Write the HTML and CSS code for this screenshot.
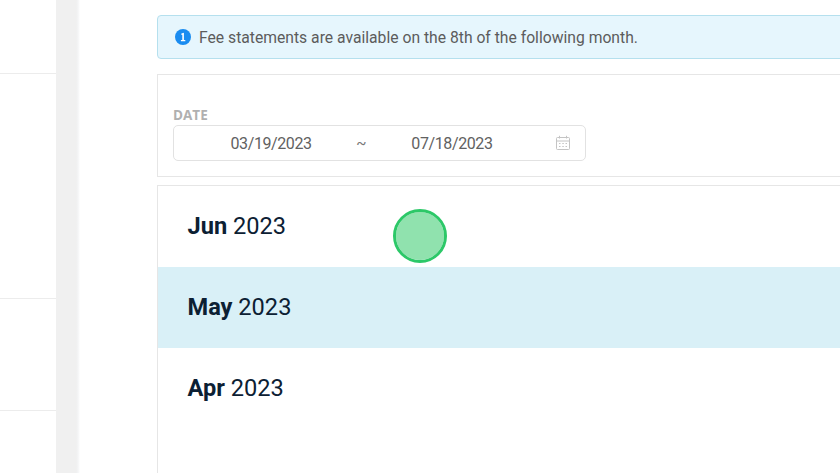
FILE: index.html
```html
<!DOCTYPE html>
<html lang="en">
<head>
<meta charset="utf-8">
<title>Fee statements</title>
<link rel="stylesheet" href="styles.css">
</head>
<body>
<div class="app">
  <aside class="sidebar">
    <div class="side-item first"></div>
    <div class="side-item second"></div>
    <div class="side-item third"></div>
  </aside>
  <div class="gutter"></div>
  <main class="main">
    <div class="alert">
      <svg class="info" viewBox="0 0 16 16" aria-hidden="true"><circle cx="8" cy="8" r="8" fill="#1a8cf0"/><path d="M6.400 4.600 8.900 3.700V11H10.300V12.300H5.900V11H7.300V5.700L6.400 6Z" fill="#fff"/></svg>
      <span>Fee statements are available on the 8th of the following month.</span>
    </div>
    <section class="filter">
      <div class="label">DATE</div>
      <div class="range">
        <span class="date start">03/19/2023</span>
        <span class="tilde">~</span>
        <span class="date end">07/18/2023</span>
        <svg class="cal" viewBox="0 0 16 16" aria-hidden="true"><g fill="none" stroke="#c4c4c4"><rect x="1.500" y="2.500" width="13" height="12" rx="1"/><path d="M1.500 6H14.500M4.500 .8V3.500M11.500 .8V3.500"/><path d="M4 8.500H5.500M7.300 8.500H8.800M10.500 8.500H12M4 11.500H5.500M7.300 11.500H8.800M10.500 11.500H12"/></g></svg>
      </div>
    </section>
    <section class="months">
      <div class="month"><b>Jun</b> 2023</div>
      <div class="month active"><b>May</b> 2023</div>
      <div class="month"><b>Apr</b> 2023</div>
    </section>
  </main>
</div>
<div class="touch"></div>
</body>
</html>
```
FILE: styles.css
```css
* { box-sizing: border-box; }
html, body { margin: 0; height: 100%; overflow: hidden; background: #fff; }
body { font-family: Roboto, "Liberation Sans", sans-serif; }
.app { display: flex; width: 840px; height: 473px; overflow: hidden; }
.sidebar { width: 56px; flex: none; }
.side-item { border-bottom: 1px solid #ececec; }
.first { height: 74px; }
.second { height: 225px; }
.third { height: 112px; }
.gutter { width: 24px; flex: none; background: linear-gradient(to right, #f0f0f0 84%, #f4f5f6 92%, #fff); }
.main { flex: none; width: 800px; padding: 15px 0 0 77px; }
.alert { display: flex; align-items: center; gap: 8px; height: 44px; width: 721px; padding-left: 17px; background: #e6f6fd; border: 1px solid #b5e0ee; border-radius: 4px; color: #5c5c5c; font-size: 15.7px; }
.info { width: 16px; height: 16px; flex: none; }
.filter { margin-top: 15px; height: 103px; width: 721px; padding: 32px 0 0 15px; border: 1px solid #e6e6e6; }
.label { font: 700 13.5px/16px "Open Sans", sans-serif; color: #b0b0b0; }
.range { display: flex; align-items: center; width: 413px; height: 36px; margin-top: 2px; border: 1px solid #e2e2e2; border-radius: 5px; color: #616161; }
.date { font-size: 16px; letter-spacing: -.4px; }
.start { margin-left: 56.500px; }
.tilde { margin-left: 44.500px; color: #777; font-size: 15px; }
.end { margin-left: 45px; }
.cal { width: 16px; height: 16px; margin-left: 62px; }
.months { margin-top: 8px; width: 721px; height: 300px; border: 1px solid #e6e6e6; border-bottom: 0; }
.month { height: 81px; padding-left: 29.500px; font-size: 23.600px; line-height: 81px; color: #0c2033; }
.month b { font-weight: 700; }
.active { background: #d9f0f7; }
.touch { position: absolute; left: 393px; top: 209px; width: 54px; height: 54px; border-radius: 50%; background: rgba(34, 197, 94, .5); border: 3px solid #2cc868; background-clip: padding-box; }
```
